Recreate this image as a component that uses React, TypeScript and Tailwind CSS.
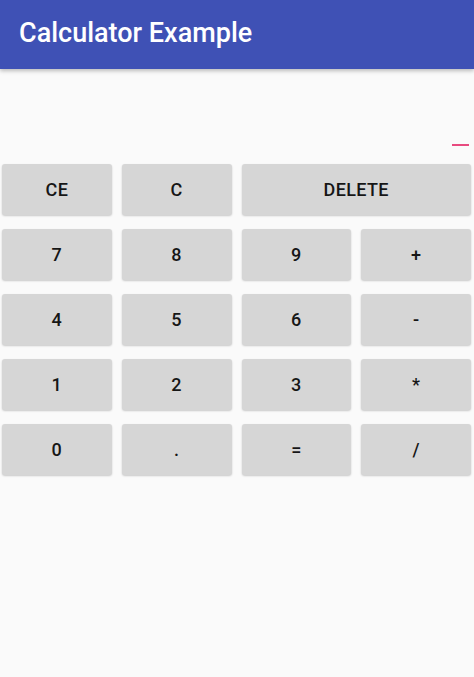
import React from "react";

const rows: { label: string; span?: boolean }[][] = [
  [{ label: "CE" }, { label: "C" }, { label: "DELETE", span: true }],
  [{ label: "7" }, { label: "8" }, { label: "9" }, { label: "+" }],
  [{ label: "4" }, { label: "5" }, { label: "6" }, { label: "-" }],
  [{ label: "1" }, { label: "2" }, { label: "3" }, { label: "*" }],
  [{ label: "0" }, { label: "." }, { label: "=" }, { label: "/" }],
];

export default function App() {
  return (
    <div
      className="w-[474px] h-[677px] bg-[#fafafa] flex flex-col overflow-hidden"
      style={{ fontFamily: "Roboto, 'Noto Sans', sans-serif" }}
    >
      <div className="relative z-10 h-[69px] shrink-0 bg-[#3f51b5] flex items-center pl-[19px] shadow-[0_2px_4px_rgba(0,0,0,0.25)]">
        <span className="text-white text-[27px] font-medium leading-none -mt-[3px]">
          Calculator Example
        </span>
      </div>
      <div className="h-[95px] shrink-0 flex items-end justify-end pr-[5px] pb-[18px]">
        <div className="w-[17px] h-[2px] bg-[#e84a7f]" />
      </div>
      <div className="grid grid-cols-4 gap-x-[10px] gap-y-[14px] pl-[2px] pr-[3px]">
        {rows.flat().map((b, i) => (
          <button
            key={i}
            className={`${b.span ? "col-span-2" : ""} h-[51px] rounded-[3px] bg-[#d6d6d6] shadow-[0_1px_2px_rgba(0,0,0,0.2)] flex items-center justify-center text-[18px] font-medium text-[#161616] tracking-[0.02em]`}
          >
            {b.label}
          </button>
        ))}
      </div>
    </div>
  );
}
